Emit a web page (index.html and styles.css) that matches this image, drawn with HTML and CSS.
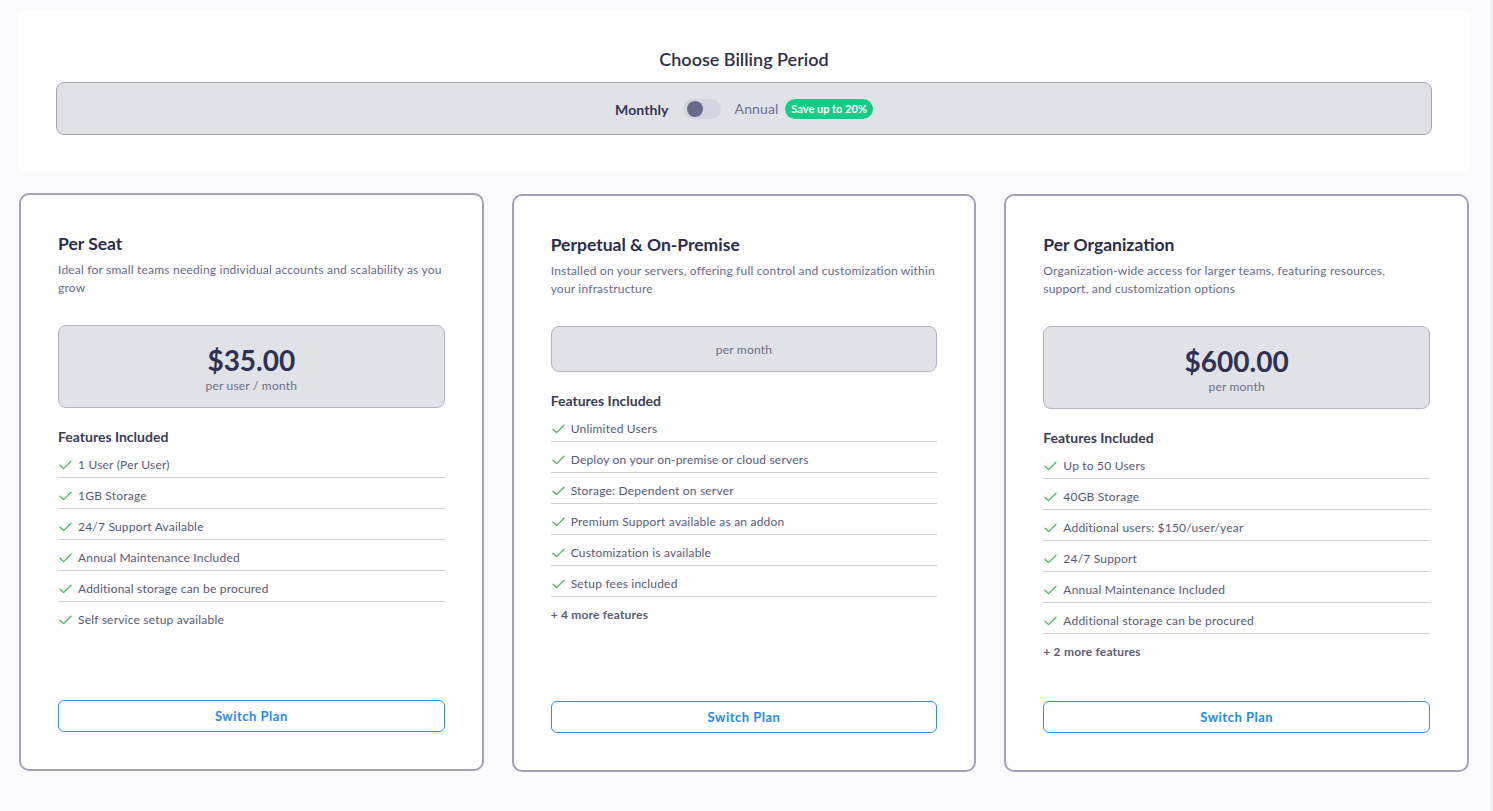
FILE: index.html
```html
<!DOCTYPE html>
<html lang="en">
<head>
<meta charset="utf-8">
<title>Choose Billing Period</title>
<link rel="stylesheet" href="styles.css">
</head>
<body>
<div class="page">
  <section class="header">
    <h1 class="header-title">Choose Billing Period</h1>
    <div class="period-bar">
      <span class="period-label period-active">Monthly</span>
      <span class="switch"><span class="knob"></span></span>
      <span class="period-label">Annual</span>
      <span class="badge">Save up to 20%</span>
    </div>
  </section>

  <section class="plans">
    <article class="card card-raised">
      <h2 class="card-title">Per Seat</h2>
      <p class="card-desc">Ideal for small teams needing individual accounts and scalability as you grow</p>
      <div class="price-box">
        <div class="price">$35.00</div>
        <div class="price-unit">per user / month</div>
      </div>
      <h3 class="features-title">Features Included</h3>
      <ul class="features">
        <li class="feature"><svg class="check" viewBox="0 0 13 10"><path d="M1 5.2 L4.6 8.6 L12 1.2"/></svg>1 User (Per User)</li>
        <li class="feature"><svg class="check" viewBox="0 0 13 10"><path d="M1 5.2 L4.6 8.6 L12 1.2"/></svg>1GB Storage</li>
        <li class="feature"><svg class="check" viewBox="0 0 13 10"><path d="M1 5.2 L4.6 8.6 L12 1.2"/></svg>24/7 Support Available</li>
        <li class="feature"><svg class="check" viewBox="0 0 13 10"><path d="M1 5.2 L4.6 8.6 L12 1.2"/></svg>Annual Maintenance Included</li>
        <li class="feature"><svg class="check" viewBox="0 0 13 10"><path d="M1 5.2 L4.6 8.6 L12 1.2"/></svg>Additional storage can be procured</li>
        <li class="feature"><svg class="check" viewBox="0 0 13 10"><path d="M1 5.2 L4.6 8.6 L12 1.2"/></svg>Self service setup available</li>
      </ul>
      <button class="switch-btn">Switch Plan</button>
    </article>

    <article class="card">
      <h2 class="card-title">Perpetual &amp; On-Premise</h2>
      <p class="card-desc">Installed on your servers, offering full control and customization within your infrastructure</p>
      <div class="price-box price-box-empty">
        <div class="price-unit">per month</div>
      </div>
      <h3 class="features-title">Features Included</h3>
      <ul class="features">
        <li class="feature"><svg class="check" viewBox="0 0 13 10"><path d="M1 5.2 L4.6 8.6 L12 1.2"/></svg>Unlimited Users</li>
        <li class="feature"><svg class="check" viewBox="0 0 13 10"><path d="M1 5.2 L4.6 8.6 L12 1.2"/></svg>Deploy on your on-premise or cloud servers</li>
        <li class="feature"><svg class="check" viewBox="0 0 13 10"><path d="M1 5.2 L4.6 8.6 L12 1.2"/></svg>Storage: Dependent on server</li>
        <li class="feature"><svg class="check" viewBox="0 0 13 10"><path d="M1 5.2 L4.6 8.6 L12 1.2"/></svg>Premium Support available as an addon</li>
        <li class="feature"><svg class="check" viewBox="0 0 13 10"><path d="M1 5.2 L4.6 8.6 L12 1.2"/></svg>Customization is available</li>
        <li class="feature"><svg class="check" viewBox="0 0 13 10"><path d="M1 5.2 L4.6 8.6 L12 1.2"/></svg>Setup fees included</li>
        <li class="feature feature-more">+ 4 more features</li>
      </ul>
      <button class="switch-btn">Switch Plan</button>
    </article>

    <article class="card">
      <h2 class="card-title">Per Organization</h2>
      <p class="card-desc">Organization-wide access for larger teams, featuring resources, support, and customization options</p>
      <div class="price-box">
        <div class="price">$600.00</div>
        <div class="price-unit">per month</div>
      </div>
      <h3 class="features-title">Features Included</h3>
      <ul class="features">
        <li class="feature"><svg class="check" viewBox="0 0 13 10"><path d="M1 5.2 L4.6 8.6 L12 1.2"/></svg>Up to 50 Users</li>
        <li class="feature"><svg class="check" viewBox="0 0 13 10"><path d="M1 5.2 L4.6 8.6 L12 1.2"/></svg>40GB Storage</li>
        <li class="feature"><svg class="check" viewBox="0 0 13 10"><path d="M1 5.2 L4.6 8.6 L12 1.2"/></svg>Additional users: $150/user/year</li>
        <li class="feature"><svg class="check" viewBox="0 0 13 10"><path d="M1 5.2 L4.6 8.6 L12 1.2"/></svg>24/7 Support</li>
        <li class="feature"><svg class="check" viewBox="0 0 13 10"><path d="M1 5.2 L4.6 8.6 L12 1.2"/></svg>Annual Maintenance Included</li>
        <li class="feature"><svg class="check" viewBox="0 0 13 10"><path d="M1 5.2 L4.6 8.6 L12 1.2"/></svg>Additional storage can be procured</li>
        <li class="feature feature-more">+ 2 more features</li>
      </ul>
      <button class="switch-btn">Switch Plan</button>
    </article>
  </section>
</div>
</body>
</html>
```

FILE: styles.css
```css
* { box-sizing: border-box; }

html, body {
  margin: 0;
  padding: 0;
}

body {
  background: #fbfbfd;
  font-family: Lato, "Noto Sans", "Liberation Sans", sans-serif;
  color: #2c2f4c;
  border-right: 3px solid #f0f0f9;
  min-height: 811px;
}

.page {
  padding: 10px 21px 30px 19px;
}

.header {
  background: #ffffff;
  padding: 37px 37px 37px 37px;
}

.header-title {
  margin: 0 0 11px;
  text-align: center;
  font-size: 18px;
  line-height: 24px;
  font-weight: 600;
  color: #2d3049;
}

.period-bar {
  height: 53px;
  background: #e1e2e8;
  border: 1px solid #a2a5b9;
  border-radius: 8px;
  display: flex;
  align-items: center;
  justify-content: center;
}

.period-label {
  font-size: 14px;
  line-height: 18px;
  color: #6b6e8b;
  letter-spacing: 0.1px;
}

.period-active {
  font-weight: 700;
  color: #33365a;
  margin-top: 3px;
}

.switch {
  width: 38px;
  height: 20px;
  border-radius: 10px;
  background: #d4d5df;
  margin: 0 14px;
  display: flex;
  align-items: center;
  padding-left: 4px;
}

.knob {
  width: 16px;
  height: 16px;
  border-radius: 50%;
  background: #676a8a;
}

.badge {
  margin-left: 7px;
  background: #13cd87;
  color: #ffffff;
  font-size: 11px;
  font-weight: 700;
  line-height: 20px;
  padding: 0 6px;
  border-radius: 10px;
}

.plans {
  margin-top: 21px;
  display: grid;
  grid-template-columns: repeat(3, 1fr);
  gap: 28px;
}

.card {
  background: #ffffff;
  border: 2px solid #a0a3b8;
  border-radius: 10px;
  height: 578px;
  padding: 37px 37px 37px 37px;
  display: flex;
  flex-direction: column;
  margin-top: 1px;
}

.card-raised {
  margin-top: 0;
  margin-bottom: 1px;
}

.card-title {
  margin: 0;
  font-size: 17.5px;
  line-height: 24px;
  font-weight: 700;
  color: #2a2d4a;
}

.card-desc {
  margin: 5px 0 0;
  font-size: 12px;
  line-height: 18px;
  color: #66698a;
  min-height: 36px;
  letter-spacing: 0.2px;
}

.price-box {
  margin-top: 28px;
  height: 83px;
  background: #e1e2e8;
  border: 1px solid #b3b5c7;
  border-radius: 8px;
  display: flex;
  flex-direction: column;
  align-items: center;
  justify-content: center;
  padding-top: 2px;
}

.price-box-empty {
  height: 46px;
  padding-top: 0;
}

.price {
  font-size: 28px;
  line-height: 36px;
  font-weight: 700;
  color: #2e3152;
}

.price-unit {
  font-size: 12px;
  line-height: 16px;
  color: #6b6e8b;
  letter-spacing: 0.2px;
}

.price-box-empty .price-unit {
  margin-top: 1px;
}

.features-title {
  margin: 19px 0 0;
  font-size: 14px;
  line-height: 20px;
  font-weight: 700;
  color: #3a3d58;
}

.features {
  list-style: none;
  margin: 0;
  padding: 0;
}

.feature {
  display: flex;
  align-items: center;
  padding: 9px 0 3px 1px;
  line-height: 18px;
  font-size: 12px;
  color: #56597a;
  border-bottom: 1px solid #cfd0da;
  letter-spacing: 0.2px;
}

.feature:last-child {
  border-bottom: none;
}

.feature-more {
  padding-top: 9px;
  font-weight: 700;
  color: #5a5d78;
  padding-left: 0;
}

.check {
  width: 13px;
  height: 10px;
  margin-right: 6px;
  fill: none;
  stroke: #4bb463;
  stroke-width: 1.3;
  stroke-linecap: round;
  stroke-linejoin: round;
}

.switch-btn {
  margin-top: auto;
  height: 32px;
  width: 100%;
  background: #ffffff;
  border: 1px solid #2590f5;
  border-radius: 6px;
  font-family: Lato, "Noto Sans", "Liberation Sans", sans-serif;
  font-size: 13px;
  font-weight: 700;
  letter-spacing: 0.5px;
  color: #1f8af0;
  cursor: pointer;
}
```
